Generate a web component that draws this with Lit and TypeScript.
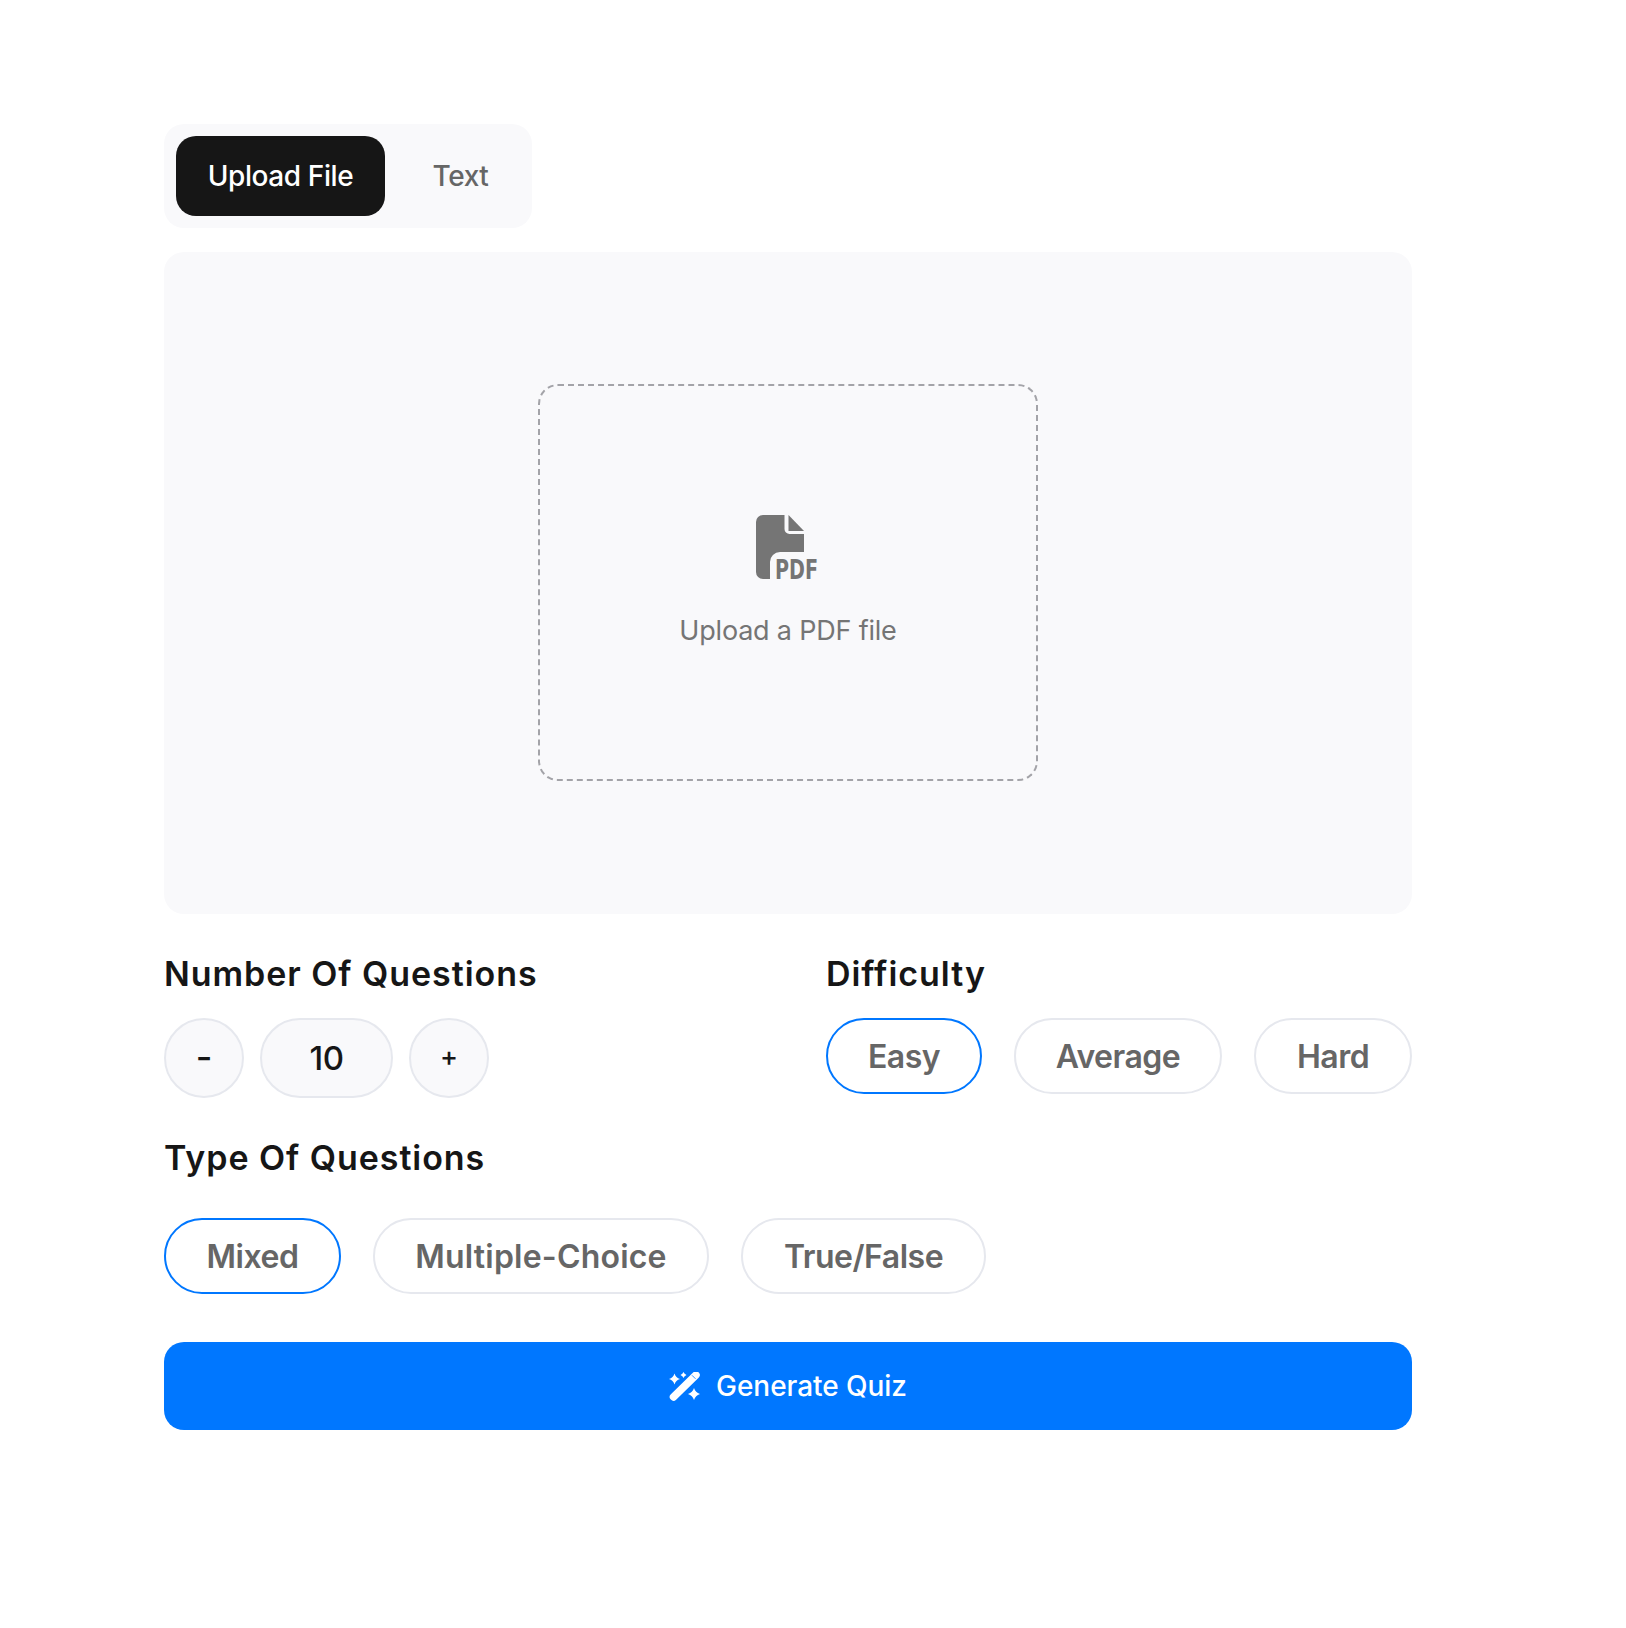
import { LitElement, html, css, svg } from "lit";
import { customElement } from "lit/decorators.js";

@customElement("app-root")
export class AppRoot extends LitElement {
  static styles = css`
    :host {
      display: block;
      min-height: 1628px;
      background: #fff;
      font-family: Inter, "Liberation Sans", sans-serif;
      box-sizing: border-box;
      padding: 124px 214px 0 164px;
      -webkit-font-smoothing: antialiased;
    }
    .tabs {
      display: inline-flex;
      gap: 16px;
      background: #f9f9fb;
      border-radius: 20px;
      padding: 12px;
      height: 104px;
      box-sizing: border-box;
      vertical-align: top;
    }
    .tab {
      height: 80px;
      border-radius: 20px;
      display: flex;
      align-items: center;
      justify-content: center;
      font-size: 28px;
      font-weight: 500;
      letter-spacing: -0.4px;
      color: #666;
    }
    .tab.on { width: 209px; background: #161616; color: #fff; }
    .tab.off { width: 119px; }
    .panel {
      margin-top: 24px;
      height: 662px;
      background: #f9f9fb;
      border-radius: 20px;
      display: flex;
      align-items: center;
      justify-content: center;
    }
    .drop {
      width: 500px;
      height: 397px;
      box-sizing: border-box;
      border: 2px dashed #a3a3a8;
      border-radius: 20px;
      margin-bottom: 2px;
      padding-bottom: 2px;
      display: flex;
      flex-direction: column;
      align-items: center;
      justify-content: center;
      gap: 36px;
    }
    .pdf { display: block; overflow: visible; margin-right: 2px; }
    .drop p { margin: 0; font-size: 27px; line-height: 32px; font-weight: 400; color: #757575; letter-spacing: -0.2px; }
    .cols { display: grid; grid-template-columns: 585px 586px; column-gap: 77px; margin-top: 38px; }
    .lab { margin: 0; font-size: 34px; font-weight: 600; color: #161616; line-height: 44px; letter-spacing: 0.95px; }
    .stepper { display: flex; gap: 16px; margin-top: 22px; }
    .stepper div {
      box-sizing: border-box;
      height: 80px;
      width: 80px;
      border: 2px solid #e6e8ee;
      border-radius: 40px;
      background: #f9f9fb;
      display: flex;
      align-items: center;
      justify-content: center;
      color: #161616;
      font-size: 27px;
      font-weight: 500;
    }
    .stepper .val { width: 133px; font-size: 33px; letter-spacing: -0.5px; }
    .stepper .minus { font-size: 36px; padding-bottom: 2px; }
    .stepper .plus { padding-bottom: 3px; }
    .chips { display: flex; gap: 32px; }
    .diff { margin-top: 22px; }
    .chip {
      box-sizing: border-box;
      height: 76px;
      border: 2px solid #e6e8ee;
      border-radius: 38px;
      display: flex;
      align-items: center;
      justify-content: center;
      font-size: 32px;
      font-weight: 600;
      color: #666;
      letter-spacing: -0.5px;
    }
    .chip.on { border-color: #0077ff; }
    .chip.wide { letter-spacing: 0.2px; }
    .type { margin-top: 38px; }
    .type .chips { margin-top: 38px; }
    .go {
      margin-top: 48px;
      height: 88px;
      border-radius: 20px;
      background: #0077ff;
      color: #fff;
      display: flex;
      align-items: center;
      justify-content: center;
      gap: 16px;
      font-size: 28px;
      font-weight: 500;
      letter-spacing: -0.05px;
    }
    .go svg { display: block; }
  `;

  pdfIcon() {
    return html`<svg class="pdf" width="62" height="64" viewBox="0 0 62 64">
      <path fill="#757575" d="M7 0H28.5V14a5 5 0 0 0 5 5H48V37H24a10 10 0 0 0-10 10V64H7a7 7 0 0 1-7-7V7a7 7 0 0 1 7-7z"/>
      <path fill="#757575" d="M32.5 0L48 16H32.5z"/>
      <text x="19" y="63.500" textLength="43" lengthAdjust="spacingAndGlyphs" font-family="DejaVu Sans Condensed, DejaVu Sans, sans-serif" font-weight="700" font-size="26" fill="#757575">PDF</text>
    </svg>`;
  }

  wandIcon() {
    return svg`<svg width="31" height="29" viewBox="0 0 31 29" fill="#fff">
      <path d="M4.500 25L27 3" stroke="#fff" stroke-width="7.500" stroke-linecap="round"/>
      <path d="M23 3.300L26.500 6.800" stroke="#0077ff" stroke-width="0.800"/>
      <path d="M5.500 1.500Q6.800 5.700 11 7Q6.800 8.300 5.500 12.500Q4.200 8.300 0 7Q4.200 5.700 5.500 1.500z"/>
      <path d="M14.500 0Q15.300 2.200 17.500 3Q15.300 3.800 14.500 6Q13.700 3.800 11.500 3Q13.700 2.200 14.500 0z"/>
      <path d="M25 16Q26.400 20.600 31 22Q26.400 23.400 25 28Q23.600 23.400 19 22Q23.600 20.600 25 16z"/>
    </svg>`;
  }

  render() {
    return html`
      <div class="tabs">
        <div class="tab on">Upload File</div>
        <div class="tab off">Text</div>
      </div>
      <div class="panel">
        <div class="drop">
          ${this.pdfIcon()}
          <p>Upload a PDF file</p>
        </div>
      </div>
      <div class="cols">
        <div>
          <h3 class="lab">Number Of Questions</h3>
          <div class="stepper">
            <div class="minus">-</div>
            <div class="val">10</div>
            <div class="plus">+</div>
          </div>
        </div>
        <div>
          <h3 class="lab">Difficulty</h3>
          <div class="chips diff">
            <div class="chip on" style="width:156px">Easy</div>
            <div class="chip" style="width:208px">Average</div>
            <div class="chip" style="width:158px">Hard</div>
          </div>
        </div>
      </div>
      <div class="type">
        <h3 class="lab">Type Of Questions</h3>
        <div class="chips">
          <div class="chip on" style="width:177px">Mixed</div>
          <div class="chip wide" style="width:336px">Multiple-Choice</div>
          <div class="chip" style="width:245px">True/False</div>
        </div>
      </div>
      <div class="go">${this.wandIcon()}<span>Generate Quiz</span></div>
    `;
  }
}
